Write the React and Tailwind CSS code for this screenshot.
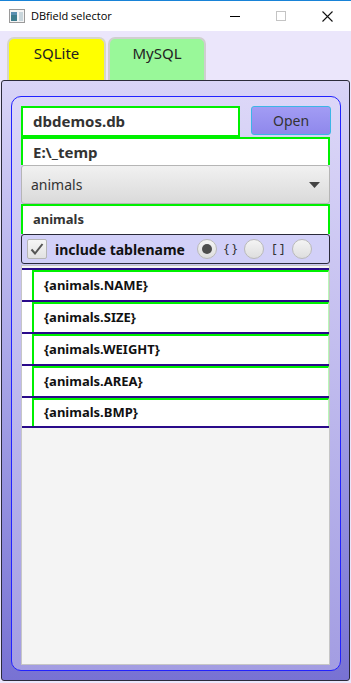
import React, { useState } from 'react'

const fields = ['NAME', 'SIZE', 'WEIGHT', 'AREA', 'BMP'];

function Radio({ checked }) {
    return (
        <span className="w-[20px] h-[20px] rounded-full border border-[#b9b9b9] bg-gradient-to-b from-[#f4f4f4] to-[#dedede] flex items-center justify-center">
            {checked && <span className="w-[10px] h-[10px] rounded-full bg-[#4d4d4d]" />}
        </span>
    );
}

function App() {
    const [table] = useState('animals');

    return (
        <div className="w-[351px] h-[683px] flex flex-col border-t border-[#1883d7] bg-[#ebe6fb] font-['Noto_Sans',sans-serif] text-[#333] overflow-hidden">
            {/* title bar */}
            <div className="h-[30px] bg-white flex items-center shrink-0">
                <svg width="16" height="14" viewBox="0 0 16 14" className="ml-[9px]">
                    <rect x="0.5" y="0.5" width="15" height="13" fill="#f4f4f4" stroke="#9a9a9a" />
                    <rect x="2" y="3" width="6" height="9" fill="#3d7c8c" />
                    <rect x="2" y="3" width="6" height="3" fill="#5a8fb0" />
                    <rect x="10" y="3" width="4" height="9" fill="#c9d6dc" />
                </svg>
                <span className="ml-[6px] text-[11px] text-black font-['Open_Sans',sans-serif]">DBfield selector</span>
                <div className="ml-auto flex items-center">
                    <span className="w-[10px] h-[1px] bg-black mr-[36px]" />
                    <span className="w-[10px] h-[10px] border border-[#c4c4c4] mr-[36px]" />
                    <svg width="11" height="11" viewBox="0 0 11 11" className="mr-[18px]">
                        <path d="M0.5 0.5 L10.5 10.5 M10.5 0.5 L0.5 10.5" stroke="#111" strokeWidth="1.1" />
                    </svg>
                </div>
            </div>

            {/* tabs */}
            <div className="flex gap-[2px] pl-[7px] pt-[6px] shrink-0">
                <div className="w-[99px] h-[43px] rounded-t-[7px] border-2 border-b-0 border-[#d6d6c8] bg-[#ffff00] text-center pt-[3px] text-[15px] text-[#222]">SQLite</div>
                <div className="w-[98px] h-[43px] rounded-t-[7px] border-2 border-b-0 border-[#cfcfcf] bg-[#99f899] text-center pt-[3px] text-[15px] text-[#222]">MySQL</div>
            </div>

            {/* pane */}
            <div className="flex-1 flex flex-col mx-[1px] mb-[2px] border border-[#2b2b3a] rounded-[3px] bg-gradient-to-b from-[#d9d4f7] to-[#7872d3] pt-[15px] pl-[9px] pr-[8px] pb-[9px]">
                <div className="flex-1 flex flex-col border border-[#2222ff] rounded-[10px] bg-gradient-to-b from-[#dcd7f8] to-[#a39de2] pl-[9px] pr-[10px] pt-[9px] pb-[5px]">
                    <div className="flex items-start justify-between">
                        <div className="w-[219px] h-[31px] border-2 border-[#00f000] bg-white flex items-center pl-[10px] text-[15px] font-bold">dbdemos.db</div>
                        <button className="w-[80px] h-[29px] -mr-[1px] rounded-[3px] border border-[#3cb6e6] bg-gradient-to-b from-[#a29cf4] to-[#8f88ec] text-[14px] text-[#333]">Open</button>
                    </div>
                    <div className="h-[28px] border-2 border-b-0 border-[#00f000] bg-white flex items-center pl-[10px] text-[15px] font-bold">E:\_temp</div>
                    <div className="h-[39px] rounded-[3px] border border-[#b5b5b5] bg-gradient-to-b from-[#f1f1f1] to-[#dadada] flex items-center pl-[9px] pr-[9px] text-[14px] text-[#333]">
                        <span>{table}</span>
                        <svg width="11" height="6" viewBox="0 0 11 6" className="ml-auto">
                            <path d="M0 0 H11 L5.5 6 Z" fill="#444" />
                        </svg>
                    </div>
                    <div className="h-[30px] border-2 border-b-0 border-[#00f000] bg-white flex items-center pl-[10px] text-[13px] font-bold">{table}</div>
                    <div className="h-[30px] border border-[#2a2a3a] rounded-[3px] bg-[#d2d0f8] flex items-center pl-[5px]">
                        <span className="w-[20px] h-[20px] rounded-[2px] border border-[#b5b5b5] bg-gradient-to-b from-[#f6f6f6] to-[#e2e2e2] flex items-center justify-center">
                            <svg width="14" height="12" viewBox="0 0 14 12">
                                <path d="M1.5 6.5 L5 10.5 L12.5 1" stroke="#555" strokeWidth="2" fill="none" />
                            </svg>
                        </span>
                        <span className="ml-[8px] text-[14px] font-bold text-[#111]">include tablename</span>
                        <span className="ml-[12px]"><Radio checked /></span>
                        <span className="mx-[7px] text-[13px] text-[#333]">{'{ }'}</span>
                        <Radio />
                        <span className="mx-[8px] text-[13px] text-[#333]">[ ]</span>
                        <Radio />
                    </div>
                    <div className="flex-1 mt-[1px] border border-[#c6c6c6] bg-[#f4f4f4] pt-[2px]">
                        {fields.map((f, i) => (
                            <div key={f} className={'h-[32px] border-t-2 border-[#2a0a8a] bg-white pl-[10px] flex ' + (i === fields.length - 1 ? 'border-b-2' : '')}>
                                <div className="flex-1 border-l-2 border-t-2 border-r border-[#00f000] border-r-[#b8f8b8] flex items-center pl-[10px] text-[13px] font-bold text-[#111]">
                                    {'{' + table + '.' + f + '}'}
                                </div>
                            </div>
                        ))}
                    </div>
                </div>
            </div>
        </div>
    )
}

export default App
